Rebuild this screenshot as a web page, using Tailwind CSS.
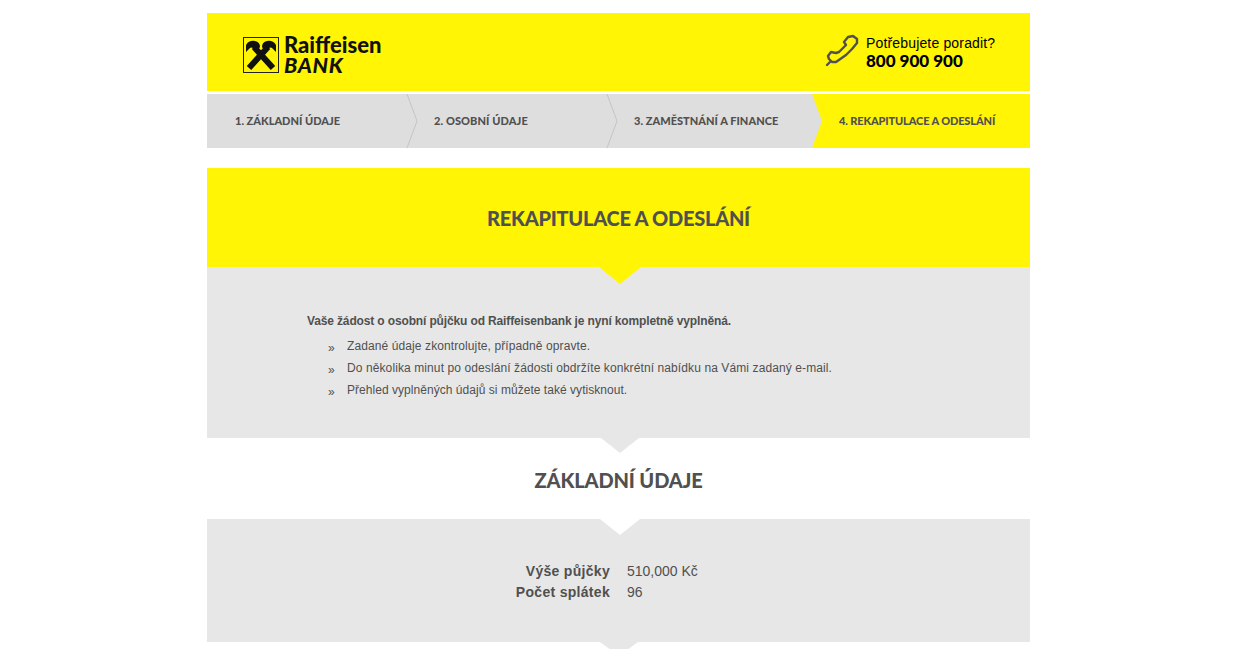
<!DOCTYPE html>
<html lang="cs">
<head>
  <meta charset="UTF-8" />
  <title>Raiffeisenbank - Rekapitulace a odeslání</title>
  <script src="https://cdn.jsdelivr.net/npm/@tailwindcss/browser@4"></script>
</head>
<body class="bg-white font-['Liberation_Sans',Arial,sans-serif] text-[#505050] overflow-hidden h-[649px]">
  <div class="w-[823px] ml-[207px] pt-[13px]">

    <!-- Header -->
    <header class="h-[78px] bg-[#fff505] flex items-center justify-between pl-[36px] pr-[35px]">
      <div class="mt-[6px] flex items-center gap-[5px] text-[#111]">
        <svg class="w-[36px] h-[36px]" viewBox="0 0 36 36">
          <rect x="0.5" y="0.5" width="35" height="35" fill="none" stroke="#222" stroke-width="1"/>
          <path d="M6 31 L25 10 M30 31 L11 10" stroke="#111" stroke-width="6" fill="none"/>
          <path d="M3 15 L3 8 Q6 3 12 4 Q17 5 17 10 L14 14 L10 11 Q8 10 7 11 Z M33 15 L33 8 Q30 3 24 4 Q19 5 19 10 L22 14 L26 11 Q28 10 29 11 Z" fill="#111"/>
        </svg>
        <div class="font-['Lato',sans-serif] font-black">
          <div class="text-[22px] leading-[20px]">Raiffeisen</div>
          <div class="text-[21.5px] leading-[20px] italic tracking-[0.7px]">BANK</div>
        </div>
      </div>
      <div class="flex items-center gap-[4px]">
        <svg class="w-[40px] h-[40px] -mt-[2px]" viewBox="0 0 40 40" fill="none" stroke="#505050" stroke-width="2.4" stroke-linejoin="round" stroke-linecap="round">
          <path d="M10 31 L14 31 L24 24 L30 18 L35 12 L35 8 L31 5 L26 6 L22 11 L24 14 L17 21 L14 22 L9 21 L6 25 L7 28 Z M9 30 L5 34"/>
        </svg>
        <div class="w-[129px] whitespace-nowrap">
          <div class="text-[14px] leading-[18px] tracking-[0.16px] text-black -mt-[1px]">Potřebujete poradit?</div>
          <div class="font-['Lato',sans-serif] font-black text-[17px] leading-[18px] text-black">800 900 900</div>
        </div>
      </div>
    </header>

    <!-- Steps -->
    <nav class="relative mt-[3px] h-[54px] flex bg-[#dedede] font-['Lato',sans-serif] font-black text-[11px] text-[#505050]">
      <div class="w-[200px] flex items-center pl-[28px]">1. ZÁKLADNÍ ÚDAJE</div>
      <div class="w-[199px] flex items-center pl-[27px] tracking-[0.1px]">2. OSOBNÍ ÚDAJE</div>
      <div class="w-[206px] flex items-center pl-[28px] tracking-[0.03px]">3. ZAMĚSTNÁNÍ A FINANCE</div>
      <div class="flex-1 flex items-center pl-[27px] bg-[#fff505] tracking-[-0.13px]">4. REKAPITULACE A ODESLÁNÍ</div>
      <svg class="absolute left-0 top-0 w-[823px] h-[54px]" viewBox="0 0 823 54" fill="none">
        <path d="M200 0 L210 27 L200 54 M400 0 L410 27 L400 54" stroke="#c4c4c4" stroke-width="1"/>
        <path d="M605 0 L615 27 L605 54 Z" fill="#dedede"/>
      </svg>
    </nav>

    <!-- Title -->
    <section class="relative mt-[20px] h-[99px] bg-[#fff505] flex items-center justify-center pt-[1px]">
      <h1 class="font-['Lato',sans-serif] font-black text-[20px] tracking-[-0.26px]">REKAPITULACE A ODESLÁNÍ</h1>
      <div class="absolute left-[392px] top-[99px] w-[42px] h-[17px] bg-[#fff505] [clip-path:polygon(0_0,100%_0,50%_100%)]"></div>
    </section>

    <!-- Intro -->
    <section class="h-[171px] bg-[#e7e7e7] pl-[100px] pt-[46px] text-[12px]">
      <p class="font-bold leading-[16px] tracking-[-0.14px]">Vaše žádost o osobní půjčku od Raiffeisenbank je nyní kompletně vyplněná.</p>
      <ul class="mt-[6px] pl-[21px] tracking-[0.1px]">
        <li class="flex h-[22px] items-center"><span class="w-[19px] pt-[3px]">»</span>Zadané údaje zkontrolujte, případně opravte.</li>
        <li class="flex h-[22px] items-center"><span class="w-[19px] pt-[3px]">»</span>Do několika minut po odeslání žádosti obdržíte konkrétní nabídku na Vámi zadaný e-mail.</li>
        <li class="flex h-[22px] items-center tracking-[0.04px]"><span class="w-[19px] pt-[3px]">»</span>Přehled vyplněných údajů si můžete také vytisknout.</li>
      </ul>
    </section>

    <!-- Section title -->
    <section class="relative h-[81px] flex items-center justify-center pt-[2px]">
      <div class="absolute left-[394px] top-0 w-[38px] h-[15px] bg-[#e7e7e7] [clip-path:polygon(0_0,100%_0,50%_100%)]"></div>
      <h2 class="font-['Lato',sans-serif] font-black text-[20px] tracking-[-0.13px]">ZÁKLADNÍ ÚDAJE</h2>
    </section>

    <!-- Basic data -->
    <section class="relative h-[123px] bg-[#e7e7e7] pt-[42px] text-[14px]">
      <div class="absolute left-[393px] top-0 w-[40px] h-[16px] bg-white [clip-path:polygon(0_0,100%_0,50%_100%)]"></div>
      <dl class="grid grid-cols-[403px_1fr] gap-x-[17px] leading-[21px]">
        <dt class="font-bold text-right tracking-[0.3px]">Výše půjčky</dt><dd>510,000 Kč</dd>
        <dt class="font-bold text-right tracking-[0.3px]">Počet splátek</dt><dd>96</dd>
      </dl>
      <div class="absolute left-[393px] top-[123px] w-[38px] h-[14px] bg-[#e7e7e7] [clip-path:polygon(0_0,100%_0,50%_100%)]"></div>
    </section>
  </div>
</body>
</html>
